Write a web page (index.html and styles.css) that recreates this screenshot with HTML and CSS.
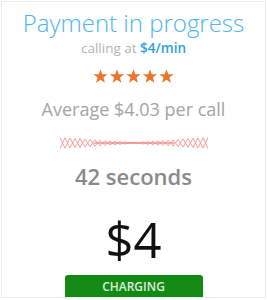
FILE: index.html
```html
<!DOCTYPE html>
<html lang="en">
<head>
	<meta charset="utf-8">
	<title>Payment</title>
	<link rel="stylesheet" href="styles.css">
</head>
<body>
	<div class="pay-card">
		<div class="pay-title">Payment in progress</div>
		<div class="pay-rate">calling at <b>$4/min</b></div>
		<div class="pay-stars">
			<svg width="81" height="15" viewBox="0 0 81 15">
				<defs>
					<path id="star" d="M7.5 0.3 L9.3 5.2 L14.6 5.3 L10.4 8.6 L11.9 13.8 L7.5 10.8 L3.1 13.8 L4.6 8.6 L0.4 5.3 L5.7 5.2 Z"/>
				</defs>
				<use href="#star" x="0" fill="#e8772a"/>
				<use href="#star" x="16.5" fill="#e8772a"/>
				<use href="#star" x="33" fill="#e8772a"/>
				<use href="#star" x="49.5" fill="#e8772a"/>
				<use href="#star" x="66" fill="#e8772a"/>
			</svg>
		</div>
		<div class="pay-avg">Average $4.03 per call</div>
		<div class="pay-wave">
			<svg width="148" height="12" viewBox="0 0 148 12">
				<g fill="none" stroke="#f05a5a" stroke-width="0.9" opacity="0.65">
					<polyline points="0,0.5 5,11.2 10,1 15,10.6 20,1.6 25,10 30,2.4 35,9.2 40,3.2 45,8.5 50,3.9 55,7.8 60,4.6 65,7.1 70,5.3 74,6 78,6.7 83,4.9 88,7.4 93,4.2 98,8.1 103,3.5 108,8.8 113,2.8 118,9.6 123,2 128,10.3 133,1.3 138,11 143,0.8 148,11.5"/>
					<polyline points="0,11.5 5,0.8 10,11 15,1.4 20,10.4 25,2 30,9.6 35,2.8 40,8.8 45,3.5 50,8.1 55,4.2 60,7.4 65,4.9 70,6.7 74,6 78,5.3 83,7.1 88,4.6 93,7.8 98,3.9 103,8.5 108,3.2 113,9.2 118,2.4 123,10 128,1.6 133,10.6 138,1 143,11.2 148,0.5"/>
					<line x1="34" y1="6" x2="114" y2="6" stroke-width="1.5"/>
				</g>
			</svg>
		</div>
		<div class="pay-time">42 seconds</div>
		<div class="pay-amount">$4</div>
		<div class="pay-status">CHARGING</div>
	</div>
</body>
</html>
```

FILE: styles.css
```css
body {
	margin: 0;
	background: #ffffff;
	font-family: "Open Sans", "Liberation Sans", sans-serif;
}

.pay-card {
	width: 263px;
	height: 295px;
	margin: 1px;
	border: 1px solid #ececec;
	display: flex;
	flex-direction: column;
	align-items: center;
	overflow: hidden;
}

.pay-title {
	margin-top: 4px;
	font-size: 24px;
	font-weight: 300;
	line-height: 33px;
	color: #4db6ea;
}

.pay-rate {
	font-size: 13.5px;
	line-height: 18px;
	color: #b4b4b4;
}

.pay-rate b {
	color: #2e9fe0;
	font-weight: 600;
}

.pay-stars {
	margin-top: 12px;
	height: 15px;
	line-height: 0;
}

.pay-avg {
	margin-top: 13px;
	font-size: 18px;
	line-height: 24px;
	color: #a4a4a4;
}

.pay-wave {
	margin-top: 16px;
	height: 12px;
	line-height: 0;
}

.pay-time {
	margin-top: 13px;
	font-size: 22px;
	font-weight: 600;
	line-height: 28px;
	color: #8a8a8a;
}

.pay-amount {
	margin-top: 19px;
	font-size: 49px;
	line-height: 60px;
	color: #111111;
}

.pay-status {
	margin-top: 6px;
	width: 138px;
	height: 24px;
	border-radius: 3px 3px 0 0;
	background: #138a13;
	color: #dfeedf;
	font-size: 12px;
	font-weight: 600;
	line-height: 24px;
	text-align: center;
}
```
